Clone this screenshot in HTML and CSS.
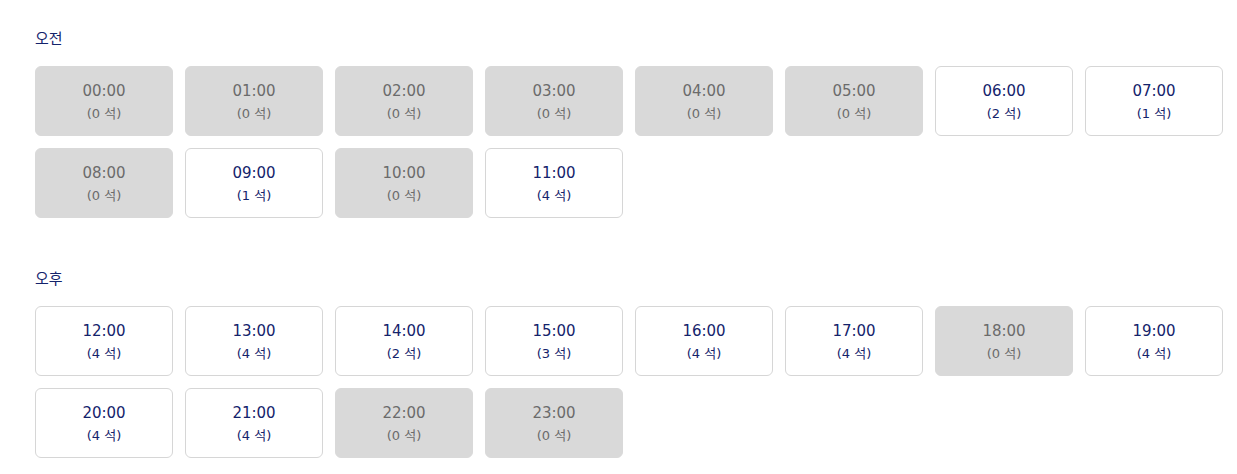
FILE: index.html
```html
<!DOCTYPE html>
<html lang="ko">
<head>
<meta charset="utf-8">
<link rel="stylesheet" href="styles.css">
</head>
<body>
<div class="page">
  <section class="period">
    <h3 class="label">오전</h3>
    <div class="grid">
      <button class="slot off"><span class="time">00:00</span><span class="seats">(0 석)</span></button>
      <button class="slot off"><span class="time">01:00</span><span class="seats">(0 석)</span></button>
      <button class="slot off"><span class="time">02:00</span><span class="seats">(0 석)</span></button>
      <button class="slot off"><span class="time">03:00</span><span class="seats">(0 석)</span></button>
      <button class="slot off"><span class="time">04:00</span><span class="seats">(0 석)</span></button>
      <button class="slot off"><span class="time">05:00</span><span class="seats">(0 석)</span></button>
      <button class="slot"><span class="time">06:00</span><span class="seats">(2 석)</span></button>
      <button class="slot"><span class="time">07:00</span><span class="seats">(1 석)</span></button>
      <button class="slot off"><span class="time">08:00</span><span class="seats">(0 석)</span></button>
      <button class="slot"><span class="time">09:00</span><span class="seats">(1 석)</span></button>
      <button class="slot off"><span class="time">10:00</span><span class="seats">(0 석)</span></button>
      <button class="slot"><span class="time">11:00</span><span class="seats">(4 석)</span></button>
    </div>
  </section>
  <section class="period second">
    <h3 class="label">오후</h3>
    <div class="grid">
      <button class="slot"><span class="time">12:00</span><span class="seats">(4 석)</span></button>
      <button class="slot"><span class="time">13:00</span><span class="seats">(4 석)</span></button>
      <button class="slot"><span class="time">14:00</span><span class="seats">(2 석)</span></button>
      <button class="slot"><span class="time">15:00</span><span class="seats">(3 석)</span></button>
      <button class="slot"><span class="time">16:00</span><span class="seats">(4 석)</span></button>
      <button class="slot"><span class="time">17:00</span><span class="seats">(4 석)</span></button>
      <button class="slot off"><span class="time">18:00</span><span class="seats">(0 석)</span></button>
      <button class="slot"><span class="time">19:00</span><span class="seats">(4 석)</span></button>
      <button class="slot"><span class="time">20:00</span><span class="seats">(4 석)</span></button>
      <button class="slot"><span class="time">21:00</span><span class="seats">(4 석)</span></button>
      <button class="slot off"><span class="time">22:00</span><span class="seats">(0 석)</span></button>
      <button class="slot off"><span class="time">23:00</span><span class="seats">(0 석)</span></button>
    </div>
  </section>
</div>
</body>
</html>
```
FILE: styles.css
```css
html, body {
  margin: 0;
  padding: 0;
  background: #ffffff;
}
body {
  font-family: "DejaVu Sans", "Noto Sans CJK KR", sans-serif;
  color: #14236b;
}
.page {
  padding: 28px 14px 0 35px;
}
.label {
  margin: 0 0 18px 0;
  font-size: 15px;
  line-height: 20px;
  font-weight: 400;
  font-family: "Noto Sans CJK KR", sans-serif;
  color: #14236b;
}
.second {
  margin-top: 50px;
}
.grid {
  display: grid;
  grid-template-columns: repeat(8, 138px);
  gap: 12px;
}
.slot {
  height: 70px;
  box-sizing: border-box;
  border: 1px solid #d6d6d6;
  border-radius: 6px;
  background: #ffffff;
  display: flex;
  flex-direction: column;
  align-items: center;
  justify-content: center;
  padding: 3px 0 0 0;
  font-family: "DejaVu Sans", "Noto Sans CJK KR", sans-serif;
  color: #14236b;
  cursor: pointer;
}
.slot.off {
  background: #d9d9d9;
  border-color: #d9d9d9;
  color: #6b6b6b;
}
.time {
  font-size: 15px;
  line-height: 22px;
}
.seats {
  font-size: 13px;
  line-height: 22px;
  margin-top: 1px;
}
```
